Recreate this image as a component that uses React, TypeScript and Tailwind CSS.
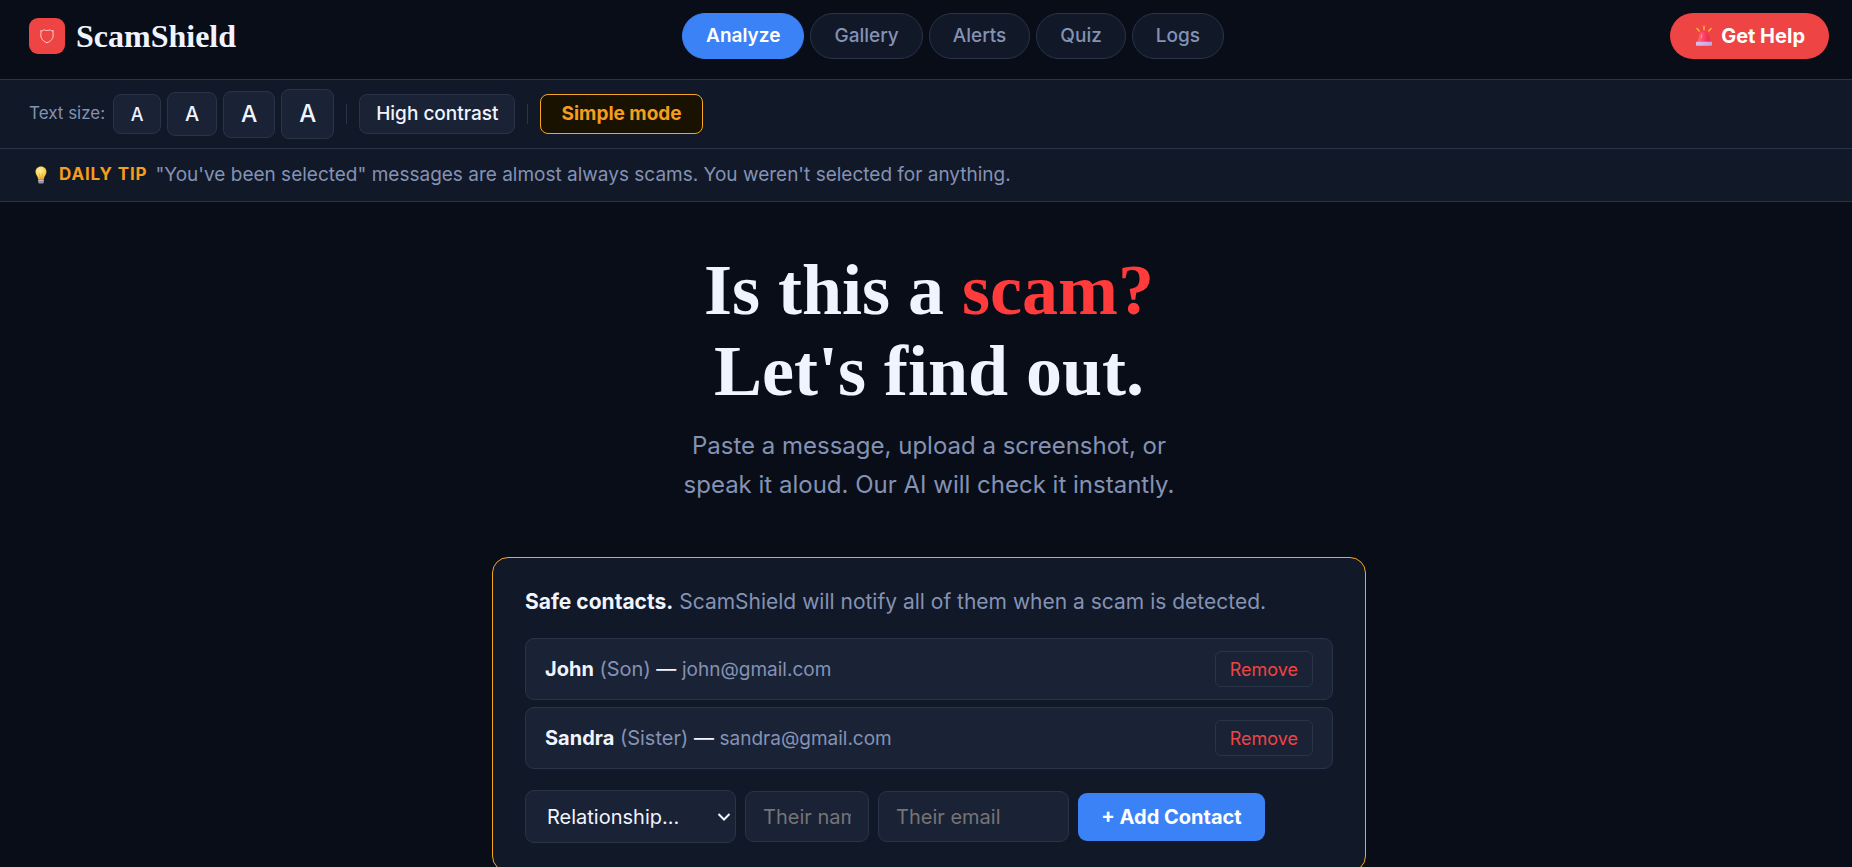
import React, { useState } from "react";
import clsx from "clsx";

interface Contact {
  name: string;
  relationship: string;
  email: string;
}

const navItems = ["Analyze", "Gallery", "Alerts", "Quiz", "Logs"];

const textSizes = [
  { label: "Small text", className: "h-10 w-12 text-[18px]" },
  { label: "Medium text", className: "h-11 w-[50px] text-[20px]" },
  { label: "Large text", className: "h-[47px] w-[52px] text-[23px]" },
  { label: "Extra large text", className: "h-[50px] w-[53px] text-[24px]" },
];

const initialContacts: Contact[] = [
  { name: "John", relationship: "Son", email: "john@gmail.com" },
  { name: "Sandra", relationship: "Sister", email: "sandra@gmail.com" },
];

const ShieldIcon = () => (
  <svg width="16" height="16" viewBox="0 0 16 16" fill="none" aria-hidden="true">
    <path
      d="M1.8 2.6C3 3 4.4 2.8 5.2 1.6C6 2.5 7 2.7 8 2.3C9 2.7 10 2.5 10.8 1.6C11.6 2.8 13 3 14.2 2.6C13.8 4 14 5.2 14.2 6.6C14.4 10.4 11.8 13.4 8 14.8C4.2 13.4 1.6 10.4 1.8 6.6C2 5.2 2.2 4 1.8 2.6Z"
      stroke="#ffe4e4"
      strokeWidth="0.9"
      strokeLinejoin="round"
    />
  </svg>
);

const SirenIcon = () => (
  <svg width="20" height="22" viewBox="0 0 20 22" aria-hidden="true">
    <defs>
      <linearGradient id="siren" x1="0" x2="1">
        <stop offset="0" stopColor="#ff6a72" />
        <stop offset="0.5" stopColor="#ff3f62" />
        <stop offset="1" stopColor="#e0285a" />
      </linearGradient>
      <linearGradient id="base" x1="0" x2="1">
        <stop offset="0" stopColor="#dcbcee" />
        <stop offset="1" stopColor="#c4a6ea" />
      </linearGradient>
    </defs>
    <path
      d="M3 3.6L5.2 6M10 1.2V4.4M17 3.6L14.8 6"
      stroke="#ffb13d"
      strokeWidth="1.5"
      strokeLinecap="round"
    />
    <path d="M3.8 17L5.2 10C5.7 7.8 7.6 6.6 10 6.6S14.3 7.8 14.8 10L16.2 17Z" fill="url(#siren)" />
    <path d="M8 9.6L7.2 13" stroke="#ff9aa8" strokeWidth="1" strokeLinecap="round" />
    <rect x="2" y="16.8" width="16" height="4" rx="0.8" fill="url(#base)" />
  </svg>
);

const BulbIcon = () => (
  <svg width="12" height="18" viewBox="0 0 12 18" aria-hidden="true">
    <defs>
      <radialGradient id="bulb" cx="0.4" cy="0.35" r="0.7">
        <stop offset="0" stopColor="#fff0a0" />
        <stop offset="0.6" stopColor="#fbd353" />
        <stop offset="1" stopColor="#eea93a" />
      </radialGradient>
    </defs>
    <path
      d="M6 0.5C2.8 0.5 0.5 2.8 0.5 5.8C0.5 8.6 2.6 9.6 3.1 13H8.9C9.4 9.6 11.5 8.6 11.5 5.8C11.5 2.8 9.2 0.5 6 0.5Z"
      fill="url(#bulb)"
    />
    <path d="M4.4 7.4L5.4 12.8M7.6 7.4L6.6 12.8" stroke="#e08f2c" strokeWidth="0.6" />
    <path d="M3.2 13H8.8V16.2C8.8 17 8 17.5 7.4 17.5H4.6C4 17.5 3.2 17 3.2 16.2Z" fill="#9b8fa8" />
    <path d="M3.2 14.5H8.8" stroke="#d5cbe0" strokeWidth="0.7" />
  </svg>
);

const Header = () => {
  const [active, setActive] = useState("Analyze");

  return (
    <header className="flex items-center justify-between border-b border-[#2a3448] pt-[13px] pr-[23px] pb-5 pl-[29px]">
      <div className="flex items-center gap-[11px]">
        <span className="flex size-9 items-center justify-center rounded-[9px] bg-[#ef4444]">
          <ShieldIcon />
        </span>
        <span className="font-['Liberation_Serif',serif] text-[32px] leading-9 font-bold">
          ScamShield
        </span>
      </div>
      <nav className="flex gap-[6px]">
        {navItems.map((item) => (
          <button
            key={item}
            onClick={() => setActive(item)}
            className={clsx(
              "h-[46px] rounded-full border px-[23px] text-[19px]",
              item === active
                ? "border-[#3b82f6] bg-[#3b82f6] font-semibold text-white"
                : "border-[#2a3448] bg-[#111827] font-medium text-[#8492b4]"
            )}
          >
            {item}
          </button>
        ))}
      </nav>
      <button className="flex h-[46px] items-center gap-[7px] rounded-full bg-[#ef4444] px-6 text-[20px] font-bold text-white">
        <SirenIcon />
        Get Help
      </button>
    </header>
  );
};

const Toolbar = () => (
  <div className="flex h-[69px] items-center border-b border-[#2a3448] bg-[#111827] px-[29px]">
    <span className="mr-2 text-[17px] text-[#8492b4]">Text size:</span>
    <div className="flex items-center gap-[6px]">
      {textSizes.map((size) => (
        <button
          key={size.label}
          aria-label={size.label}
          className={clsx(
            "rounded-lg border border-[#2a3448] bg-[#1a2235] font-medium",
            size.className
          )}
        >
          A
        </button>
      ))}
    </div>
    <span className="mx-3 h-5 w-px bg-[#2a3448]" />
    <button className="h-10 rounded-lg border border-[#2a3448] bg-[#1a2235] px-4 text-[19px] font-medium">
      High contrast
    </button>
    <span className="mx-3 h-5 w-px bg-[#2a3448]" />
    <button className="h-10 rounded-lg border border-[#f5a623] bg-[#1a1200] px-5 text-[19px] font-bold text-[#f59e1b]">
      Simple mode
    </button>
  </div>
);

const ContactRow: React.FC<{ contact: Contact; onRemove: () => void }> = ({
  contact,
  onRemove,
}) => (
  <li className="flex h-[62px] items-center justify-between rounded-[9px] border border-[#2a3448] bg-[#1a2235] px-[19px]">
    <p className="text-[20px]">
      <strong>{contact.name}</strong>{" "}
      <span className="text-[#8492b4]">({contact.relationship})</span> —{" "}
      <span className="text-[19px] text-[#8492b4]">{contact.email}</span>
    </p>
    <button
      onClick={onRemove}
      className="h-9 rounded-md border border-[#2a3448] px-[14px] text-[18px] text-[#ef4444]"
    >
      Remove
    </button>
  </li>
);

const SafeContacts = () => {
  const [contacts, setContacts] = useState(initialContacts);

  return (
    <section className="mt-[53px] w-full max-w-[874px] rounded-2xl border border-[#f5a623] bg-[#111827] px-8 pt-8 pb-7">
      <p className="text-[21px] leading-6 text-[#8492b4]">
        <strong className="text-[#f0f4ff]">Safe contacts.</strong> ScamShield
        will notify all of them when a scam is detected.
      </p>
      <ul className="mt-6 flex flex-col gap-[7px]">
        {contacts.map((contact) => (
          <ContactRow
            key={contact.email}
            contact={contact}
            onRemove={() =>
              setContacts(contacts.filter((c) => c.email !== contact.email))
            }
          />
        ))}
      </ul>
      <form
        onSubmit={(e) => e.preventDefault()}
        className="mt-[21px] flex items-center gap-[9px] text-[20px]"
      >
        <div className="relative w-[211px]">
          <select
            aria-label="Relationship"
            className="h-[53px] w-full appearance-none rounded-[9px] border border-[#2a3448] bg-[#1a2235] pl-[21px]"
          >
            <option>Relationship...</option>
            <option>Son</option>
            <option>Daughter</option>
            <option>Sister</option>
            <option>Brother</option>
          </select>
          <svg
            className="pointer-events-none absolute top-[22px] right-[5px]"
            width="14"
            height="10"
            viewBox="0 0 14 10"
            fill="none"
            aria-hidden="true"
          >
            <path d="M1.5 2L7 7.5L12.5 2" stroke="#f0f4ff" strokeWidth="2" />
          </svg>
        </div>
        <input
          type="text"
          aria-label="Their name"
          placeholder="Their name"
          className="h-[51px] w-[124px] rounded-[9px] border border-[#2a3448] bg-[#1a2235] px-[17px] placeholder:text-[#757575]"
        />
        <input
          type="email"
          aria-label="Their email"
          placeholder="Their email"
          className="h-[51px] w-[191px] rounded-[9px] border border-[#2a3448] bg-[#1a2235] px-[17px] placeholder:text-[#757575]"
        />
        <button className="h-12 w-[187px] rounded-[9px] bg-[#3b82f6] text-[20px] font-bold whitespace-nowrap text-white">
          + Add Contact
        </button>
      </form>
    </section>
  );
};

const App = () => {
  return (
    <div className="min-h-screen bg-[#090d18] font-['Inter',sans-serif] text-[#f0f4ff]">
      <Header />
      <Toolbar />
      <div className="flex h-[53px] items-center border-b border-[#2a3448] bg-[#111827] px-[35px]">
        <BulbIcon />
        <strong className="ml-3 text-[17px] tracking-wider text-[#f59e1b]">
          DAILY TIP
        </strong>
        <span className="ml-2 text-[19px] text-[#8492b4]">
          "You've been selected" messages are almost always scams. You weren't
          selected for anything.
        </span>
      </div>
      <main className="flex flex-col items-center pt-12 pb-16 pl-[6px]">
        <h1 className="text-center font-['Liberation_Serif',serif] text-[72px] leading-[81px] font-bold">
          Is this a <span className="text-[#ff3b3b]">scam?</span>
          <br />
          Let's find out.
        </h1>
        <p className="mt-[14px] text-center text-[24px] leading-[39px] text-[#8492b4]">
          Paste a message, upload a screenshot, or
          <br />
          speak it aloud. Our AI will check it instantly.
        </p>
        <SafeContacts />
      </main>
    </div>
  );
};

export default App;
